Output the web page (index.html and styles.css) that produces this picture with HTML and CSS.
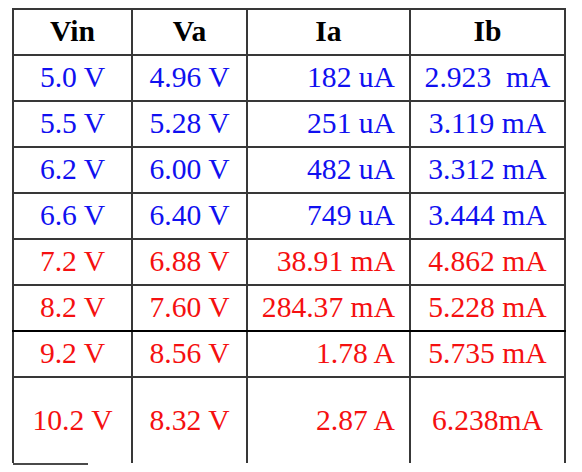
FILE: index.html
```html
<!DOCTYPE html>
<html lang="en">
<head>
    <meta charset="UTF-8">
    <title>Vin / Va / Ia / Ib</title>
    <link rel="stylesheet" href="styles.css">
</head>
<body>

    <table class="data-table">
        <colgroup>
            <col class="col-vin">
            <col class="col-va">
            <col class="col-ia">
            <col class="col-ib">
        </colgroup>
        <tr class="head-row">
            <th>Vin</th>
            <th>Va</th>
            <th>Ia</th>
            <th>Ib</th>
        </tr>
        <tr class="blue">
            <td>5.0 V</td><td>4.96 V</td><td class="num">182 uA</td><td>2.923&nbsp; mA</td>
        </tr>
        <tr class="blue">
            <td>5.5 V</td><td>5.28 V</td><td class="num">251 uA</td><td>3.119 mA</td>
        </tr>
        <tr class="blue">
            <td>6.2 V</td><td>6.00 V</td><td class="num">482 uA</td><td>3.312 mA</td>
        </tr>
        <tr class="blue">
            <td>6.6 V</td><td>6.40 V</td><td class="num">749 uA</td><td>3.444 mA</td>
        </tr>
        <tr class="red">
            <td>7.2 V</td><td>6.88 V</td><td class="num">38.91 mA</td><td>4.862 mA</td>
        </tr>
        <tr class="red thick">
            <td>8.2 V</td><td>7.60 V</td><td class="num">284.37 mA</td><td>5.228 mA</td>
        </tr>
        <tr class="red">
            <td>9.2 V</td><td>8.56 V</td><td class="num">1.78 A</td><td>5.735 mA</td>
        </tr>
        <tr class="red last">
            <td>10.2 V</td><td>8.32 V</td><td class="num">2.87 A</td><td>6.238mA</td>
        </tr>
    </table>
    <div class="stub-line"></div>

</body>
</html>
```

FILE: styles.css
```css
* {
    margin: 0;
    padding: 0;
    box-sizing: border-box;
}

body {
    background: #ffffff;
    padding: 8px 0 0 12px;
    font-family: "Liberation Serif", "Times New Roman", serif;
}

.data-table {
    border-collapse: collapse;
    table-layout: fixed;
    width: 554px;
    font-size: 29.6px;
}

.col-vin { width: 119px; }
.col-va { width: 115px; }
.col-ia { width: 163px; }
.col-ib { width: 155px; }

.data-table th,
.data-table td {
    border: 2px solid #383838;
    text-align: center;
    vertical-align: middle;
    white-space: nowrap;
    padding: 0 0 1px 0;
}

.data-table tr {
    height: 46px;
}

.head-row th {
    font-weight: bold;
    color: #000000;
}

.data-table td.num {
    text-align: right;
    padding-right: 14px;
}

.blue td {
    color: #1010f0;
}

.red td {
    color: #f51010;
}

/* heavier rule under the 8.2 V row */
.thick td {
    border-bottom-color: #000000;
}

.last {
    height: 86px !important;
}

.last td {
    border-bottom: none;
}

.stub-line {
    width: 75px;
    height: 2px;
    background: #4a4a4a;
    margin-left: 1px;
}
```
